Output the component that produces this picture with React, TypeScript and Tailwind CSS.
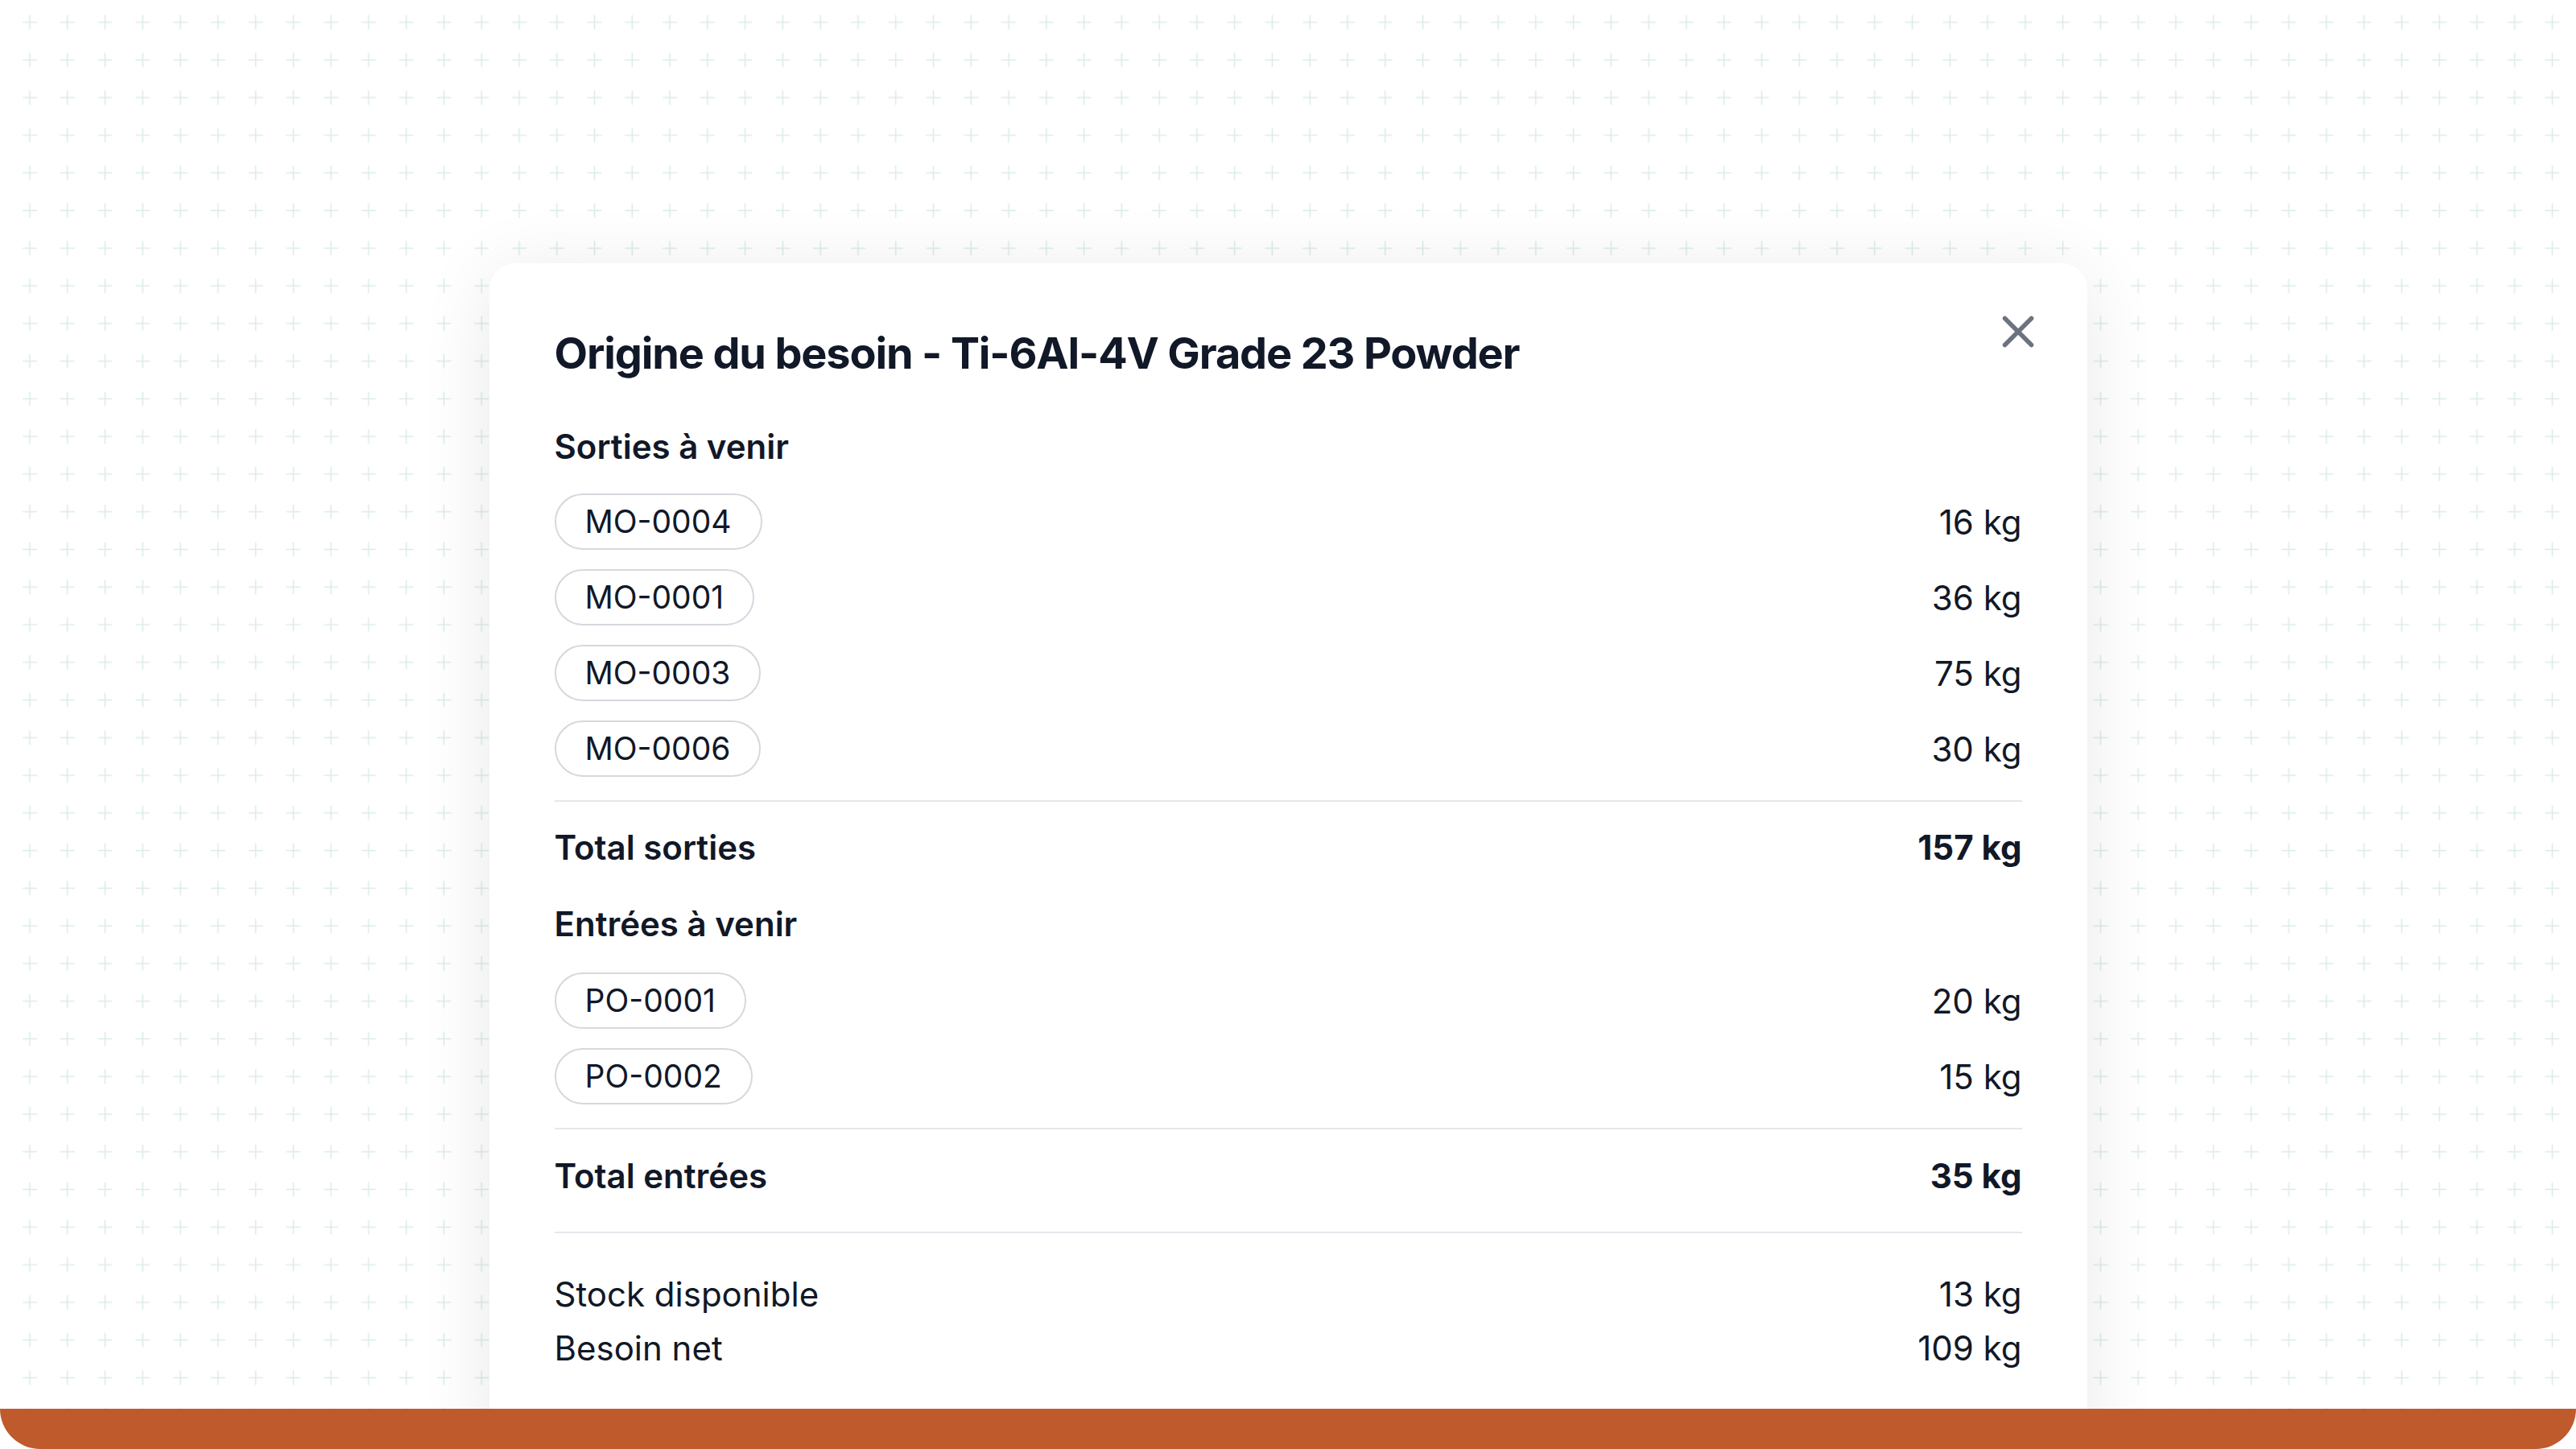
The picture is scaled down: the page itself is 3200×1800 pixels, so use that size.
import { X } from 'lucide-react'

type Line = { id: string; qty: string }

const sorties: Line[] = [
  { id: 'MO-0004', qty: '16 kg' },
  { id: 'MO-0001', qty: '36 kg' },
  { id: 'MO-0003', qty: '75 kg' },
  { id: 'MO-0006', qty: '30 kg' },
]

const entrees: Line[] = [
  { id: 'PO-0001', qty: '20 kg' },
  { id: 'PO-0002', qty: '15 kg' },
]

function PlusGrid() {
  return (
    <svg className="pointer-events-none absolute inset-0 h-full w-full" aria-hidden>
      <defs>
        <pattern id="plus" x="13.6" y="4.3" width="46.77" height="46.77" patternUnits="userSpaceOnUse">
          <path d="M23.4 14.4v18M14.4 23.4h18" stroke="#dcece6" strokeWidth="1.6" fill="none" />
        </pattern>
      </defs>
      <rect width="100%" height="100%" fill="url(#plus)" />
    </svg>
  )
}

function OrderRows({ rows }: { rows: Line[] }) {
  return (
    <div className="flex flex-col gap-[24px]">
      {rows.map((row) => (
        <div className="flex items-center justify-between" key={row.id}>
          <span className="inline-flex h-[70px] items-center rounded-full border-2 border-[#d5d8de] px-[36px] text-[39px] text-[#111827]">
            {row.id}
          </span>
          <span className="text-[42px] text-[#111827]">{row.qty}</span>
        </div>
      ))}
    </div>
  )
}

function TotalRow({ label, value }: { label: string; value: string }) {
  return (
    <div className="flex h-[58px] items-center justify-between text-[42px] font-semibold text-[#111827]">
      <span>{label}</span>
      <span className="font-bold">{value}</span>
    </div>
  )
}

function NeedOriginModal() {
  return (
    <div className="relative mx-auto mt-[327px] w-[1985px] rounded-[32px] bg-white px-[81px] pb-[120px] pt-[77px] shadow-[0_10px_90px_rgba(0,0,0,0.09)]">
      <button className="absolute right-[53px] top-[52px] text-[#6b7280]" type="button">
        <X size={66} strokeWidth={2} />
      </button>

      <h2 className="h-[70px] text-[54px] font-bold leading-[70px] tracking-[-0.021em] text-[#111827]">
        Origine du besoin - Ti-6Al-4V Grade 23 Powder
      </h2>

      <h3 className="mt-[52px] h-[58px] text-[42px] font-semibold leading-[58px] text-[#111827]">
        Sorties à venir
      </h3>
      <div className="mt-[29px]">
        <OrderRows rows={sorties} />
      </div>

      <div className="mt-[29px] border-t-2 border-[#e5e7eb] pt-[27px]">
        <TotalRow label="Total sorties" value="157 kg" />
      </div>

      <h3 className="mt-[38px] h-[58px] text-[42px] font-semibold leading-[58px] text-[#111827]">
        Entrées à venir
      </h3>
      <div className="mt-[31px]">
        <OrderRows rows={entrees} />
      </div>

      <div className="mt-[29px] border-t-2 border-[#e5e7eb] pt-[28px]">
        <TotalRow label="Total entrées" value="35 kg" />
      </div>

      <div className="mt-[41px] border-t-2 border-[#e5e7eb] pt-[42px] text-[42px] leading-[67px] text-[#111827]">
        <div className="flex justify-between">
          <span>Stock disponible</span>
          <span>13 kg</span>
        </div>
        <div className="flex justify-between">
          <span>Besoin net</span>
          <span>109 kg</span>
        </div>
      </div>
    </div>
  )
}

export default function App() {
  return (
    <div className="flex h-[1800px] w-full flex-col bg-white font-['Inter',sans-serif]">
      <div className="relative h-[1750px] overflow-hidden">
        <PlusGrid />
        <div className="relative">
          <NeedOriginModal />
        </div>
      </div>
      <div className="h-[50px] rounded-b-[50px] bg-[#bf5a2d]" />
    </div>
  )
}
